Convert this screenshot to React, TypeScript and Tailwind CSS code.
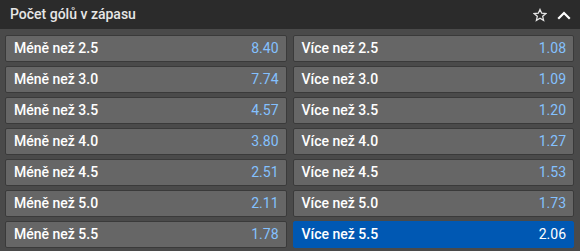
import React from "react";

const rows: [string, string, string, string][] = [
  ["2.5", "8.40", "2.5", "1.08"],
  ["3.0", "7.74", "3.0", "1.09"],
  ["3.5", "4.57", "3.5", "1.20"],
  ["4.0", "3.80", "4.0", "1.27"],
  ["4.5", "2.51", "4.5", "1.53"],
  ["5.0", "2.11", "5.0", "1.73"],
  ["5.5", "1.78", "5.5", "2.06"],
];

function Cell({ label, odd, selected }: { label: string; odd: string; selected?: boolean }) {
  return (
    <div
      className={
        "h-[27px] flex items-center justify-between pl-[8px] pr-[7px] rounded-[2px] border " +
        (selected ? "bg-[#0058b3] border-[#0058b3]" : "bg-[#666666] border-[#3a3a3a]")
      }
    >
      <span className="text-[14px] text-white font-medium">{label}</span>
      <span className={"text-[14px] " + (selected ? "text-white" : "text-[#84c1ff]")}>{odd}</span>
    </div>
  );
}

export default function App() {
  return (
    <div className="w-[580px] h-[251px] bg-[#4a4a4a] flex flex-col" style={{ fontFamily: "Roboto, 'Liberation Sans', sans-serif" }}>
      <div className="h-[29px] bg-[#2b2b2b] flex items-center justify-between pl-[10px] pr-[9px]">
        <span className="text-[14px] font-medium text-[#e6e6e6]">Počet gólů v zápasu</span>
        <div className="flex items-center gap-[10px]">
          <svg width="14" height="14" viewBox="0 0 24 24" fill="none" stroke="#e6e6e6" strokeWidth="2.2" strokeLinejoin="miter">
            <polygon points="12,2.5 14.9,9 22,9.6 16.6,14.3 18.2,21.3 12,17.6 5.8,21.3 7.4,14.3 2,9.6 9.1,9" />
          </svg>
          <svg width="14" height="14" viewBox="0 0 14 14" fill="none" stroke="#ffffff" strokeWidth="2.2" strokeLinecap="square">
            <polyline points="2,10 7,5 12,10" />
          </svg>
        </div>
      </div>
      <div className="grid grid-cols-2 gap-x-[6px] gap-y-[4px] pt-[6px] pl-[5px] pr-[6px]">
        {rows.map((r, i) => (
          <React.Fragment key={i}>
            <Cell label={`Méně než ${r[0]}`} odd={r[1]} />
            <Cell label={`Více než ${r[2]}`} odd={r[3]} selected={i === 6} />
          </React.Fragment>
        ))}
      </div>
    </div>
  );
}
